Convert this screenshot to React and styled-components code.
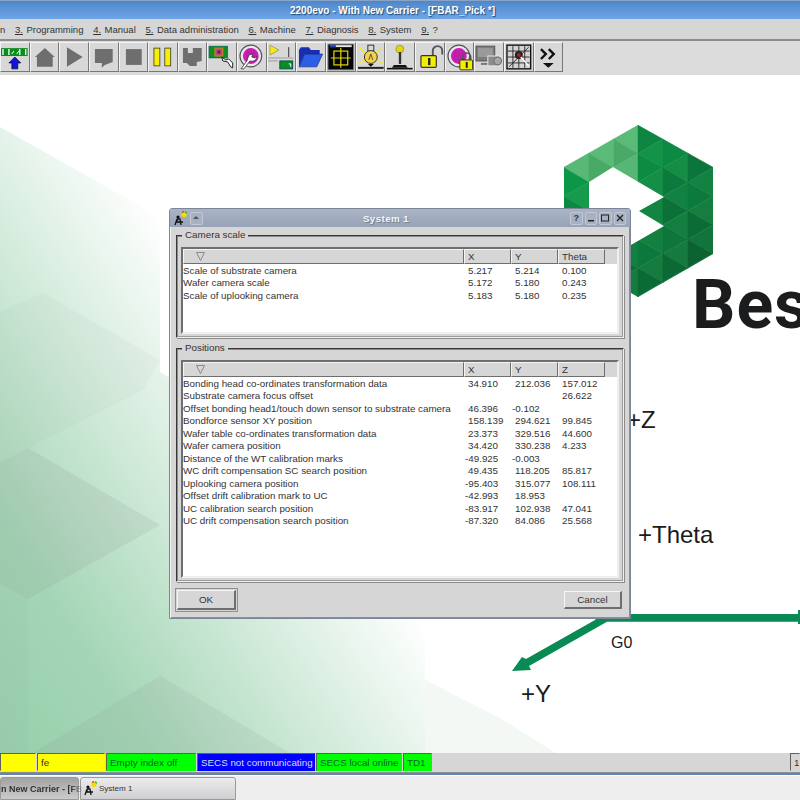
import React from "react";
import styled, {createGlobalStyle} from "styled-components";

const GlobalStyle = createGlobalStyle`
  html, body {
    margin: 0;
    padding: 0;
    background: #d6d6d6;
  }
  * {
    box-sizing: border-box;
  }
`;

const Screen = styled.div`
  width: 800px;
  height: 800px;
  display: flex;
  flex-direction: column;
  overflow: hidden;
  font-family: "Liberation Sans", Arial, sans-serif;
  font-size: 9.8px;
  color: #333;
  background: #d6d6d6;
`;

const TitleBar = styled.div`
  height: 19px;
  flex: none;
  display: flex;
  align-items: center;
  justify-content: center;
  padding-right: 15px;
  border-top: 1px solid #8aa3c4;
  background: linear-gradient(#4d87cb, #6ea5e6);
  color: #fff;
  font-size: 10px;
  font-weight: 700;
  text-shadow: 1px 1px 1px #27476e;
`;

const MenuBar = styled.div`
  height: 22px;
  flex: none;
  display: flex;
  align-items: center;
  gap: 9.7px;
  padding-top: 1px;
  font-size: 9.5px;
  background: #d6d6d6;
  border-bottom: 2px solid #8c8c8c;
`;

const MenuItem = styled.span`
  white-space: nowrap;
  u {
    margin-right: 3.5px;
  }
`;

const Toolbar = styled.div`
  height: 34px;
  flex: none;
  display: flex;
  padding-top: 1px;
  background: #dcdcdc;
`;

const ToolButton = styled.div`
  width: 29.65px;
  height: 30px;
  flex: none;
  display: flex;
  align-items: center;
  justify-content: center;
  background: #d8d8d8;
  border: 1px solid;
  border-color: #f4f4f4 #777 #777 #f4f4f4;
`;

const Canvas = styled.div`
  position: relative;
  flex: 1;
  overflow: hidden;
  background: #fff;
`;

const Backdrop = styled.svg`
  position: absolute;
  inset: 0;
  width: 800px;
  height: 678px;
`;

const CanvasLabel = styled.span`
  position: absolute;
  left: ${p => p.$x}px;
  top: ${p => p.$y}px;
  font-size: ${p => p.$size || 24}px;
  line-height: 1;
  color: #1b1b1b;
  white-space: nowrap;
`;

const Brand = styled.span`
  position: absolute;
  left: 692px;
  top: 196px;
  font-family: Roboto, sans-serif;
  font-size: 68px;
  line-height: 1;
  font-weight: 700;
  letter-spacing: 1px;
  color: #1b1c1e;
  white-space: nowrap;
`;

const Dialog = styled.div`
  position: absolute;
  left: 169px;
  top: 133px;
  width: 462px;
  height: 411px;
  display: flex;
  flex-direction: column;
  background: #d6d6d6;
  border: 1px solid #7c8696;
  border-radius: 3px 3px 0 0;
  box-shadow: inset 1px 1px 0 #f2f2f2, inset -1px -1px 0 #8e8e8e;
`;

const DialogTitle = styled.div`
  position: relative;
  height: 18px;
  flex: none;
  display: flex;
  align-items: center;
  justify-content: space-between;
  padding: 0 4px 0 3px;
  background: linear-gradient(#a9b4c6, #97a3b6);
`;

const DialogCaption = styled.span`
  position: absolute;
  left: 0;
  right: 28px;
  text-align: center;
  font-weight: 700;
  color: #f2f4f7;
  letter-spacing: 0.4px;
  text-shadow: 1px 1px 0 #77818f;
`;

const TitleGroup = styled.div`
  position: relative;
  display: flex;
  align-items: center;
  gap: 2px;
`;

const WinButton = styled.div`
  width: 12.5px;
  height: 13px;
  display: flex;
  align-items: center;
  justify-content: center;
  border: 1px solid #c2c9d5;
  border-radius: 2px;
  background: #a7b1c1;
  color: #30343c;
  font-size: 9px;
  font-weight: 700;
`;

const DialogBody = styled.div`
  flex: 1;
  display: flex;
  flex-direction: column;
  gap: 10px;
  padding: 8px 6px 0 6px;
`;

const Group = styled.div`
  position: relative;
  height: ${p => p.$height}px;
  flex: none;
  padding: 9.5px 3px 2px 3px;
  border: 2px groove #e6e6e6;
  border-color: #8b8b8b #f0f0f0 #f0f0f0 #8b8b8b;
  box-shadow: 1px 1px 0 #8b8b8b;
`;

const Legend = styled.span`
  position: absolute;
  left: 4px;
  top: -8px;
  padding: 0 3px;
  line-height: 12px;
  background: #d6d6d6;
`;

const TableBox = styled.div`
  height: 100%;
  background: #fff;
  border: 2px solid;
  border-color: #6e6e6e #f0f0f0 #f0f0f0 #6e6e6e;
`;

const Row = styled.div`
  display: grid;
  grid-template-columns: 281px 47px 47px 47px 1fr;
  height: ${p => (p.$header ? 15 : 12.5)}px;
  line-height: 13px;
  background: ${p => (p.$header ? "#d6d6d6" : "transparent")};
`;

const HeadCell = styled.div`
  display: flex;
  align-items: center;
  padding-left: ${p => (p.$filter ? 12 : 3)}px;
  border: 1px solid;
  border-color: #f4f4f4 #6e6e6e #6e6e6e #f4f4f4;
`;

const Cell = styled.div`
  white-space: nowrap;
  padding-left: ${p => (p.$neg ? 1 : 4)}px;
`;

const NameCell = styled.div`
  white-space: nowrap;
`;

const DialogActions = styled.div`
  flex: 1;
  display: flex;
  align-items: center;
  justify-content: space-between;
  margin-top: -10px;
  padding: 0 2px 1px 1px;
`;

const PushButton = styled.div`
  width: ${p => p.$width}px;
  height: ${p => p.$height}px;
  display: flex;
  align-items: center;
  justify-content: center;
  background: #d6d6d6;
  border: 1px solid;
  border-width: 1px 2px 2px 1px;
  border-color: #f6f6f6 #6e6e6e #6e6e6e #f6f6f6;
  outline: ${p => (p.$focus ? "1px solid #8f8f8f" : "none")};
  outline-offset: 1px;
`;

const StatusBar = styled.div`
  height: 20px;
  flex: none;
  display: flex;
  gap: 1px;
  padding-bottom: 1px;
  background: #d6d6d6;
  border-bottom: 1px solid #8f8f8f;
`;

const StatusCell = styled.div`
  width: ${p => p.$width}px;
  flex: none;
  display: flex;
  align-items: center;
  padding-left: 3px;
  white-space: nowrap;
  overflow: hidden;
  background: ${p => p.$bg};
  color: ${p => p.$fg};
  border: 1px solid;
  border-color: #60605a transparent transparent #60605a;
`;

const StatusSpacer = styled.div`
  flex: 1;
`;

const TaskBar = styled.div`
  height: 27px;
  flex: none;
  display: flex;
  align-items: flex-end;
  gap: 1px;
  background: #eeeeee;
  border-top: 2px solid #6485ad;
  box-shadow: inset 0 1px 0 #fff;
`;

const TaskButton = styled.div`
  width: ${p => p.$width}px;
  height: 23px;
  flex: none;
  display: flex;
  align-items: center;
  gap: 1px;
  white-space: nowrap;
  padding-left: ${p => (p.$active ? 0 : 2)}px;
  border: 1px solid #9a9a9a;
  border-radius: 3px 3px 0 0;
  background: ${p => (p.$active ? "linear-gradient(#a2a2a2, #cbcbcb)" : "linear-gradient(#ececec, #cfcfd2)")};
  font-size: ${p => (p.$active ? 9 : 8)}px;
  font-weight: ${p => (p.$active ? 700 : 400)};
`;

const TaskLabel = styled.span`
  -webkit-mask-image: linear-gradient(to right, #000 85%, transparent);
  mask-image: linear-gradient(to right, #000 85%, transparent);
`;

const cameraRows = [
  ["Scale of substrate camera", "5.217", "5.214", "0.100"],
  ["Wafer camera scale", "5.172", "5.180", "0.243"],
  ["Scale of uplooking camera", "5.183", "5.180", "0.235"],
];

const positionRows = [
  ["Bonding head co-ordinates transformation data", "34.910", "212.036", "157.012"],
  ["Substrate camera focus offset", "", "", "26.622"],
  ["Offset bonding head1/touch down sensor to substrate camera", "46.396", "-0.102", ""],
  ["Bondforce sensor XY position", "158.139", "294.621", "99.845"],
  ["Wafer table co-ordinates transformation data", "23.373", "329.516", "44.600"],
  ["Wafer camera position", "34.420", "330.238", "4.233"],
  ["Distance of the WT calibration marks", "-49.925", "-0.003", ""],
  ["WC drift compensation SC search position", "49.435", "118.205", "85.817"],
  ["Uplooking camera position", "-95.403", "315.077", "108.111"],
  ["Offset drift calibration mark to UC", "-42.993", "18.953", ""],
  ["UC calibration search position", "-83.917", "102.938", "47.041"],
  ["UC drift compensation search position", "-87.320", "84.086", "25.568"],
];

const menuItems = [
  ["", "n"],
  ["3.", "Programming"],
  ["4.", "Manual"],
  ["5.", "Data administration"],
  ["6.", "Machine"],
  ["7.", "Diagnosis"],
  ["8.", "System"],
  ["9.", "?"],
];

const Tool = ({children}) => (
  <svg width="28" height="28" viewBox="0 0 28 28">{children}</svg>
);

const Wrench = ({x = 0, y = 0}) => (
  <path transform={`translate(${x} ${y})`} d="M0 0l4 3 3-1 4 4 0 5-2-1-3-5-5-1z" fill="#fff" stroke="#222" strokeWidth="1"/>
);

const Wafer = ({color = "#d21bb6"}) => (
  <g>
    <circle cx="13" cy="13" r="11" fill="#e8e8f2" stroke="#555" strokeWidth="1.2"/>
    <circle cx="13" cy="13" r="8" fill={color}/>
    <path d="M7 10h13M7 13h13M7 16h13M10 6v14M13 6v14M16 6v14" stroke="#8a2f88" strokeWidth=".5"/>
  </g>
);

const Lock = ({x = 0, y = 0, open, scale = 1}) => (
  <g transform={`translate(${x} ${y}) scale(${scale})`}>
    <path d={open ? "M10 8V4a4 4 0 0 1 8 0v3" : "M3 8V5a4 4 0 0 1 8 0v3"} fill="none" stroke="#555" strokeWidth="1.6"/>
    <rect x="0" y="8" width="13" height="10" rx="1" fill="#f2ee00" stroke="#333"/>
    <rect x="6" y="10" width="2" height="6" fill="#222"/>
  </g>
);

const toolIcons = [
  <Tool key="board">
    <rect x="0" y="5" width="27" height="8" fill="#0d8c1e"/>
    <path d="M2 6v6M8 6v6M19 6v6M25 6v6" stroke="#dfe" strokeWidth="1.4"/>
    <path d="M11 11l2-3M16 11l2-3" stroke="#fff"/>
    <path d="M14 14l6 6h-3v6h-6v-6H8z" fill="#1414e0" stroke="#000" strokeWidth=".7"/>
  </Tool>,
  <Tool key="home"><path d="M14 5l10 9h-2v10H6V14H4z" fill="#6e6e6e"/></Tool>,
  <Tool key="play"><path d="M7 4l16 10L7 24z" fill="#6e6e6e"/></Tool>,
  <Tool key="step"><path d="M5 6h18v13l-8 3-3 3v-5H5z" fill="#6e6e6e"/></Tool>,
  <Tool key="stop"><rect x="6" y="6" width="16" height="16" fill="#6e6e6e"/></Tool>,
  <Tool key="pause">
    <rect x="5" y="5" width="6" height="18" fill="#f6f000" stroke="#333" strokeWidth=".8"/>
    <rect x="16" y="5" width="6" height="18" fill="#f6f000" stroke="#333" strokeWidth=".8"/>
  </Tool>,
  <Tool key="notch"><path d="M4 5h5v5h5V5h9v13l-5 1v4h-7l-3-3H4z" fill="#6e6e6e"/></Tool>,
  <Tool key="board-tool">
    <rect x="1" y="3" width="19" height="12" fill="#118c25" stroke="#065" strokeWidth=".6"/>
    <rect x="7" y="5" width="8" height="8" fill="#c4467c" stroke="#c98a18"/>
    <rect x="9.5" y="7.5" width="3" height="3" fill="#51205c"/>
    <Wrench x="14" y="14"/>
  </Tool>,
  <Tool key="wafer-tool">
    <Wafer/>
    <path d="M3 26l6-8 2-6 4-1-1 3 3 1 2-2c0 4-3 6-7 5l-6 8z" fill="#fff" stroke="#333" strokeWidth=".8"/>
  </Tool>,
  <Tool key="flag">
    <path d="M2 2l9 5-9 5z" fill="#f4ec10" stroke="#777" strokeWidth=".6"/>
    <path d="M0 15h26M0 18h10" stroke="#9a9a9a" strokeWidth="1"/>
    <path d="M21 4v10" stroke="#333"/>
    <rect x="12" y="18" width="13" height="8" fill="#0c8d20" stroke="#055"/>
    <path d="M21 21h2v3" stroke="#fff" fill="none"/>
  </Tool>,
  <Tool key="folder">
    <path d="M2 7l2-3h8l2 3h9v4H8L2 24z" fill="#1a2fb0"/>
    <path d="M8 11h18l-6 13H2z" fill="#2c5fe4" stroke="#0e1c80" strokeWidth=".6"/>
  </Tool>,
  <Tool key="scope">
    <rect x="1" y="1" width="26" height="26" fill="#050505" stroke="#777"/>
    <rect x="3" y="2" width="22" height="2" fill="#e8e8e8"/>
    <rect x="3" y="2" width="6" height="2" fill="#1c3cc8"/>
    <rect x="7" y="8" width="14" height="14" fill="none" stroke="#e6d800" strokeWidth="1.2"/>
    <path d="M14 5v20M4 15h20" stroke="#e6d800" strokeWidth="1.2"/>
  </Tool>,
  <Tool key="lamp">
    <path d="M3 5l6 6M25 5l-6 6M2 20l6-3M26 20l-6-3" stroke="#f4ec10" strokeWidth="1.2"/>
    <rect x="11" y="2" width="6" height="6" fill="#d8d8d8" stroke="#333"/>
    <circle cx="14" cy="14" r="6.5" fill="#f3d34a" stroke="#333"/>
    <path d="M12 17l2-6 2 6" stroke="#333" fill="none" strokeWidth=".8"/>
    <rect x="1" y="24" width="26" height="2" fill="#222"/>
    <path d="M11 21h6l-3 3z" fill="#111"/>
  </Tool>,
  <Tool key="joystick">
    <circle cx="14" cy="6" r="4" fill="#e4d600" stroke="#776" strokeWidth=".6"/>
    <rect x="13" y="9" width="2.4" height="12" fill="#333"/>
    <path d="M8 22h12l2 3H6z" fill="#111"/>
    <rect x="1" y="25" width="26" height="1.6" fill="#111"/>
  </Tool>,
  <Tool key="open-lock"><Lock x="5" y="3" scale={1.2} open/></Tool>,
  <Tool key="wafer-lock">
    <Wafer/>
    <Lock x="14" y="9"/>
  </Tool>,
  <Tool key="monitors">
    <rect x="1" y="3" width="19" height="15" fill="#7d7d7d" stroke="#555"/>
    <rect x="3" y="5" width="15" height="9" fill="#9a9a9a"/>
    <path d="M6 20h10v2H6z" fill="#777"/>
    <rect x="13" y="13" width="12" height="10" fill="#8c8c8c" stroke="#e6e6e6"/>
    <circle cx="23" cy="18" r="4" fill="#a6a6a6" stroke="#6b6b6b"/>
  </Tool>,
  <Tool key="map">
    <rect x="2" y="2" width="24" height="24" fill="#d4d4d4" stroke="#111" strokeWidth="1.4"/>
    <path d="M3 8h22M3 14h22M3 20h22M8 3v22M14 3v22M20 3v22M4 24L24 4" stroke="#222" strokeWidth=".9"/>
    <circle cx="14" cy="12" r="4" fill="#222"/>
    <circle cx="14" cy="12" r="2" fill="#b02020"/>
    <path d="M16 14l8 9" stroke="#fff" strokeWidth="1.4"/>
  </Tool>,
  <Tool key="more">
    <path d="M6 6l5 5-5 5M14 6l5 5-5 5" fill="none" stroke="#111" strokeWidth="2.4"/>
    <path d="M8 20h11l-5.5 5z" fill="#111"/>
  </Tool>,
];

// triangular facets of the logo, clipped by the hexagon
const logoFacets = () => {
  const facets = [];
  const colX = [564, 589, 613.5, 638, 663, 688, 713];
  const yAt = (col, k) => 125 + (col % 2 === 1 ? 0 : 14) + k * 28.6;
  const shade = (x, y, n) => {
    const t = Math.min(1, Math.max(0, ((x - 564) / 149) * 0.5 + ((y - 125) / 172) * 0.6));
    const wobble = [0, 9, -8, 5, -11, 7][n % 6];
    if (x < 632 && y < 172) {
      return `rgb(${80 + wobble},${178 + wobble},${110 + wobble})`;
    }
    return `rgb(${12 + Math.max(0, wobble)},${Math.round(165 - 62 * t + wobble)},${Math.round(78 - 25 * t + wobble * 0.5)})`;
  };
  let n = 0;
  for (let c = 0; c < 6; c++) {
    const shift = c % 2 === 0 ? 1 : 0;
    for (let k = -2; k < 8; k++) {
      const lA = [colX[c], yAt(c, k)];
      const lB = [colX[c], yAt(c, k + 1)];
      const rA = [colX[c + 1], yAt(c + 1, k + shift)];
      const rB = [colX[c + 1], yAt(c + 1, k + 1 + shift)];
      [[lA, lB, rA], [rA, rB, lB]].forEach(tri => {
        const cx = (tri[0][0] + tri[1][0] + tri[2][0]) / 3;
        const cy = (tri[0][1] + tri[1][1] + tri[2][1]) / 3;
        const fill = shade(cx, cy, n);
        facets.push(
          <polygon key={n} points={tri.map(p => p.join(",")).join(" ")} fill={fill} stroke={fill} strokeWidth=".4"/>
        );
        n++;
      });
    }
  }
  return facets;
};

const DataTable = ({columns, rows}) => (
  <TableBox>
    <Row $header>
      <HeadCell $filter>
        <svg width="9" height="9" viewBox="0 0 9 9">
          <path d="M.5 .5h8L4.5 8.5z" fill="none" stroke="#8a8a8a"/>
        </svg>
      </HeadCell>
      {columns.map(col => <HeadCell key={col}>{col}</HeadCell>)}
    </Row>
    {rows.map(([name, ...values]) => (
      <Row key={name}>
        <NameCell>{name}</NameCell>
        {values.map((value, i) => <Cell key={i} $neg={value.startsWith("-")}>{value}</Cell>)}
      </Row>
    ))}
  </TableBox>
);

const PersonIcon = () => (
  <svg width="15" height="15" viewBox="0 0 15 15">
    <circle cx="5" cy="6" r="1.6" fill="#111"/>
    <path d="M4 8h3l1 6M4 8L2 14M4 8v3h6" fill="none" stroke="#111" strokeWidth="1.3"/>
    <circle cx="11" cy="3.5" r="2.6" fill="#f0e000"/>
    <path d="M9 1.5l2-1" stroke="#d22" strokeWidth="1.2"/>
    <path d="M12 .8l2 1.4" stroke="#2a2" strokeWidth="1.2"/>
  </svg>
);

const App = () => (
  <Screen>
    <GlobalStyle/>
    <TitleBar>2200evo - With New Carrier - [FBAR_Pick *]</TitleBar>
    <MenuBar>
      {menuItems.map(([num, label]) => (
        <MenuItem key={label}>{num && <u>{num}</u>}{label}</MenuItem>
      ))}
    </MenuBar>
    <Toolbar>
      {toolIcons.map(icon => <ToolButton key={icon.key}>{icon}</ToolButton>)}
    </Toolbar>
    <Canvas>
      <Backdrop viewBox="0 75 800 678">
        <defs>
          <linearGradient id="wash" gradientUnits="userSpaceOnUse" x1="0" y1="752" x2="358" y2="520">
            <stop offset="0" stopColor="#98cfab"/>
            <stop offset="0.3" stopColor="#a4d6b6"/>
            <stop offset="1" stopColor="#ffffff"/>
          </linearGradient>
          <clipPath id="hex">
            <polygon points="638,125 713,167 713,254 638,297 564,254 564,167"/>
          </clipPath>
        </defs>
        <polygon points="0,127 160,217 160,372 425,525 425,680 500,718 556,753 0,753" fill="url(#wash)"/>
        <polygon points="425,680 500,718 556,753 425,753" fill="#f3f8f5"/>
        <polygon points="0,312 43,293 160,360 143,390 28,448 0,463" fill="#808080" opacity=".05"/>
        <polygon points="0,463 28,448 160,525 28,599 0,584" fill="#808080" opacity=".13"/>
        <polygon points="33,753 160,676 290,753" fill="#808080" opacity=".1"/>
        <polygon points="0,584 28,599 28,753 0,753" fill="#808080" opacity=".04"/>

        <g clipPath="url(#hex)">{logoFacets()}</g>
        <polygon points="589,182 613,167 664,197 639,211 664,226 589,269" fill="#fff"/>

        <path d="M600 614H798V621.7H607L529 666L531 670L512 671L522 657L526 659L595 620Z" fill="#088a55"/>
        <rect x="798" y="610" width="2" height="14" fill="#088a55"/>
      </Backdrop>
      <Brand>Bes</Brand>
      <CanvasLabel $x={627} $y={333}>+Z</CanvasLabel>
      <CanvasLabel $x={638} $y={448}>+Theta</CanvasLabel>
      <CanvasLabel $x={611} $y={560} $size={16}>G0</CanvasLabel>
      <CanvasLabel $x={521} $y={607}>+Y</CanvasLabel>

      <Dialog>
        <DialogTitle>
          <DialogCaption>System 1</DialogCaption>
          <TitleGroup>
            <PersonIcon/>
            <WinButton>
              <svg width="8" height="6" viewBox="0 0 8 6"><path d="M4 1l3 3H1z" fill="#555"/></svg>
            </WinButton>
          </TitleGroup>
          <TitleGroup>
            <WinButton>?</WinButton>
            <WinButton>
              <svg width="8" height="8" viewBox="0 0 8 8"><rect x="1" y="6" width="6" height="1.5" fill="#222"/></svg>
            </WinButton>
            <WinButton>
              <svg width="8" height="8" viewBox="0 0 8 8"><rect x=".5" y="1" width="7" height="6" fill="none" stroke="#222"/></svg>
            </WinButton>
            <WinButton>
              <svg width="8" height="8" viewBox="0 0 8 8"><path d="M1 1l6 6M7 1L1 7" stroke="#222" strokeWidth="1.3"/></svg>
            </WinButton>
          </TitleGroup>
        </DialogTitle>
        <DialogBody>
          <Group $height={103}>
            <Legend>Camera scale</Legend>
            <DataTable columns={["X", "Y", "Theta"]} rows={cameraRows}/>
          </Group>
          <Group $height={234}>
            <Legend>Positions</Legend>
            <DataTable columns={["X", "Y", "Z"]} rows={positionRows}/>
          </Group>
          <DialogActions>
            <PushButton $width={59} $height={20} $focus>OK</PushButton>
            <PushButton $width={58} $height={18}>Cancel</PushButton>
          </DialogActions>
        </DialogBody>
      </Dialog>
    </Canvas>
    <StatusBar>
      <StatusCell $width={36} $bg="#ffff00" $fg="#333"/>
      <StatusCell $width={68} $bg="#ffff00" $fg="#333">fe</StatusCell>
      <StatusCell $width={90} $bg="#00ff00" $fg="#063">Empty index off</StatusCell>
      <StatusCell $width={118} $bg="#0000ff" $fg="#dde">SECS not communicating</StatusCell>
      <StatusCell $width={86} $bg="#00ff00" $fg="#063">SECS local online</StatusCell>
      <StatusCell $width={29} $bg="#00ff00" $fg="#063">TD1</StatusCell>
      <StatusSpacer/>
      <StatusCell $width={10} $bg="#d6d6d6" $fg="#333">1</StatusCell>
    </StatusBar>
    <TaskBar>
      <TaskButton $width={79} $active>
        <TaskLabel>n New Carrier - [FB</TaskLabel>
      </TaskButton>
      <TaskButton $width={156}>
        <PersonIcon/>
        System 1
      </TaskButton>
    </TaskBar>
  </Screen>
);

export default App;
